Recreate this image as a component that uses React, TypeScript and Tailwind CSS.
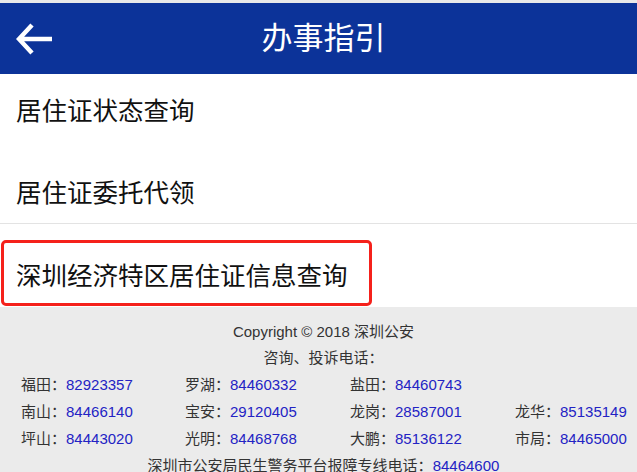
export default function App() {
  const items = [
    { label: '居住证状态查询', cls: 'h-[76px] pt-[24px]' },
    { label: '居住证委托代领', cls: 'h-[74px] pt-[30px] border-b border-[#e3e3e3]' },
  ];

  const phones = [
    ['福田', '82923357'], ['罗湖', '84460332'], ['盐田', '84460743'], null,
    ['南山', '84466140'], ['宝安', '29120405'], ['龙岗', '28587001'], ['龙华', '85135149'],
    ['坪山', '84443020'], ['光明', '84468768'], ['大鹏', '85136122'], ['市局', '84465000'],
  ];

  return (
    <div className="w-[637px] h-[472px] overflow-hidden bg-white font-['Liberation_Sans','Noto_Sans_CJK_SC',sans-serif]">
      <div className="h-[3px] bg-[#e9e9e9]" />
      <header className="h-[71px] bg-[#0c3399] flex items-center relative">
        <svg className="absolute left-[16px] top-[20px]" width="37" height="32" viewBox="0 0 37 32" fill="none">
          <path d="M36 16H4M16 2L3 16l13 14" stroke="white" strokeWidth="4.5" strokeLinejoin="miter" />
        </svg>
        <h1 className="flex-1 text-center pl-[10px] text-white text-[31px] leading-none">办事指引</h1>
      </header>

      {items.map((it) => (
        <div key={it.label} className={`px-[16px] text-[25.5px] leading-[26px] text-[#111] ${it.cls}`}>
          {it.label}
        </div>
      ))}
      <div className="relative h-[83px] pt-[39px] px-[16px] text-[25.5px] leading-[26px] text-[#111]">
        深圳经济特区居住证信息查询
        <div className="absolute left-[1px] top-[16px] w-[371px] h-[66px] border-[3.5px] border-[#f5211b] rounded-[5px]" />
      </div>

      <footer className="bg-[#ebebeb] h-[172px] pt-[12px] text-[15px] text-[#333]">
        <div className="text-center pl-[10px] leading-[26px]">Copyright © 2018 深圳公安</div>
        <div className="text-center pl-[10px] leading-[26px]">咨询、投诉电话：</div>
        <div className="grid grid-cols-[164px_165px_165px_1fr] pl-[21px] leading-[27px]">
          {phones.map((p, i) =>
            p ? (
              <div key={i}>
                {p[0]}：<span className="text-[#2323c4]">{p[1]}</span>
              </div>
            ) : (
              <div key={i} />
            )
          )}
        </div>
        <div className="text-center pl-[10px] leading-[27px]">
          深圳市公安局民生警务平台报障专线电话：<span className="text-[#2323c4]">84464600</span>
        </div>
      </footer>
    </div>
  );
}
